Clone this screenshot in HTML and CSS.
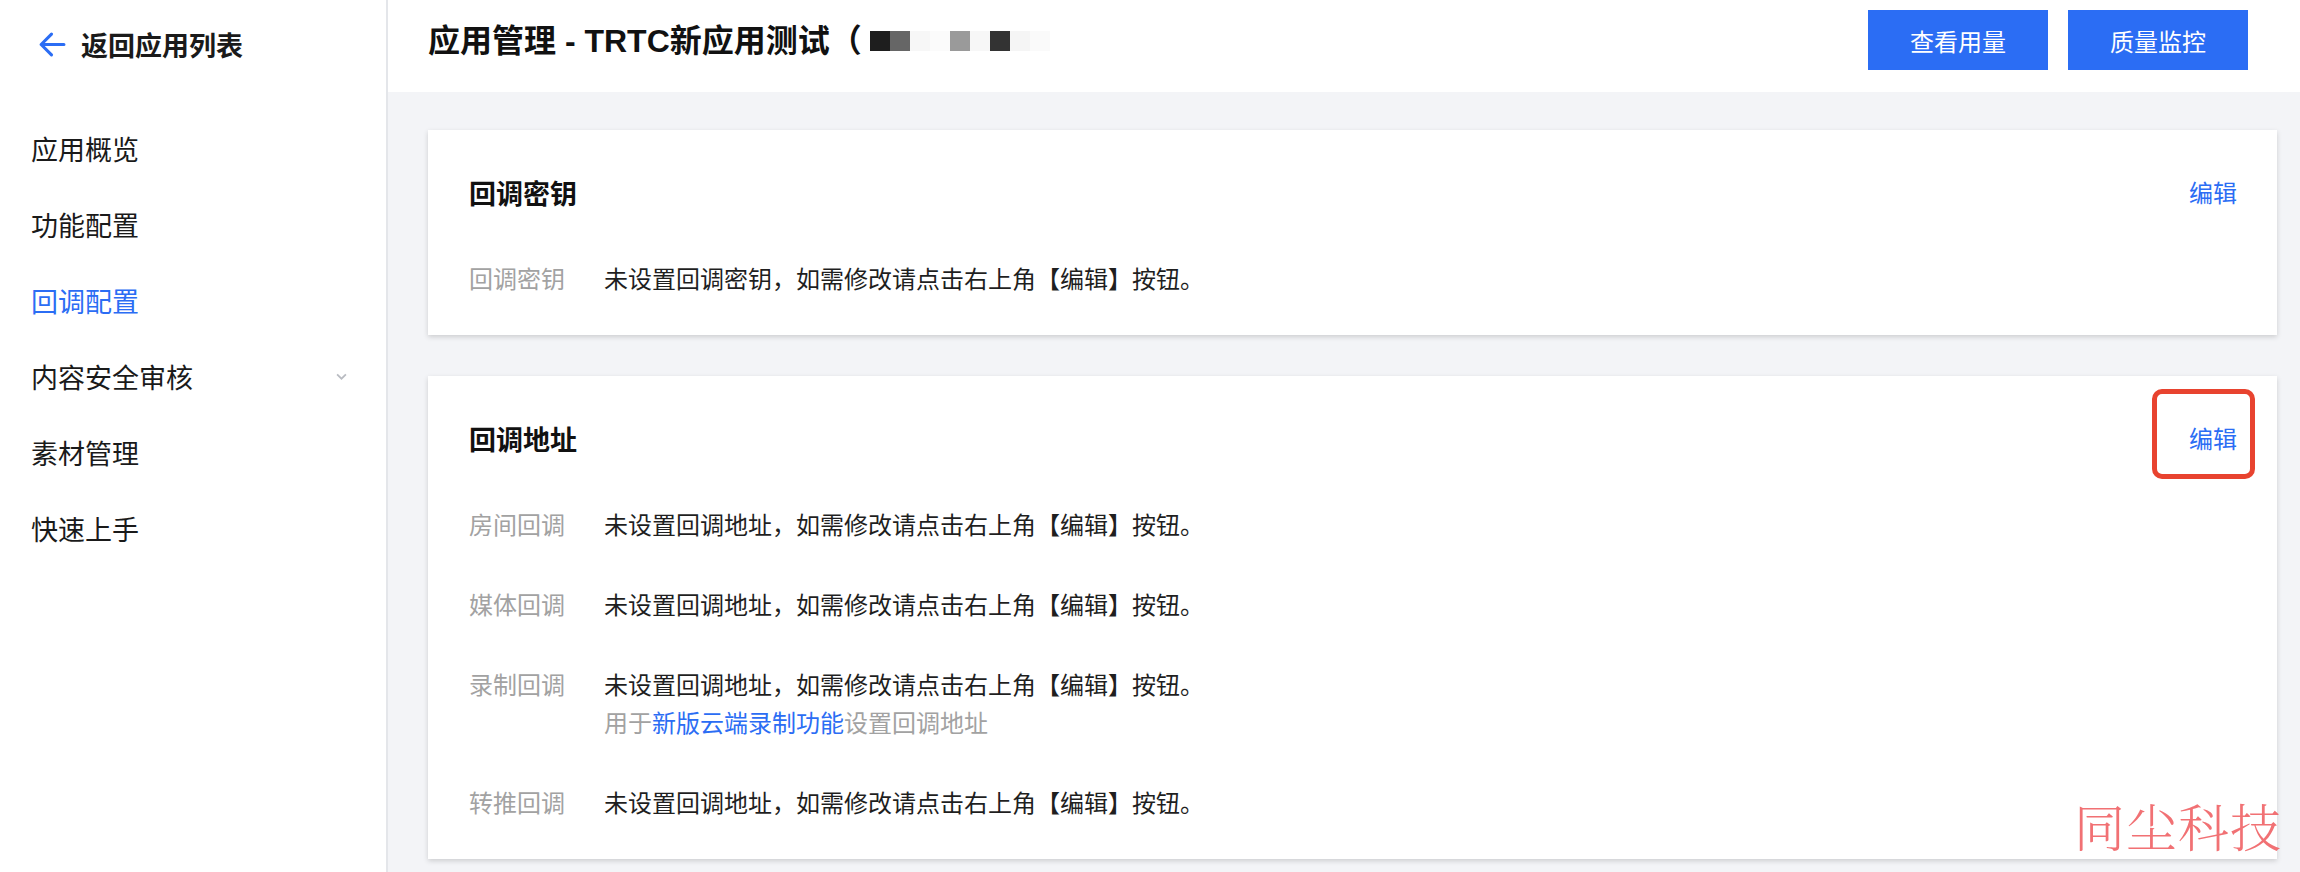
FILE: index.html
```html
<!DOCTYPE html>
<html lang="zh-CN">
  <head>
    <meta charset="UTF-8" />
    <meta name="viewport" content="width=device-width, initial-scale=1.0" />
    <title>回调配置</title>
    <link rel="stylesheet" href="styles.css">
  </head>
  <body>
    <aside class="sidebar">
      <a class="back" href="#">
        <svg class="back-icon" viewBox="0 0 28 28" fill="none">
          <path d="M26 14H4M14 4L4 14l10 10" stroke="#2b6df4" stroke-width="3" stroke-linecap="round" stroke-linejoin="round" />
        </svg>
        <span>返回应用列表</span>
      </a>
      <nav class="menu">
        <a class="menu-item" href="#">应用概览</a>
        <a class="menu-item" href="#">功能配置</a>
        <a class="menu-item active" href="#">回调配置</a>
        <a class="menu-item" href="#">
          内容安全审核
          <svg class="chevron" viewBox="0 0 10 6" fill="none">
            <path d="M1 1l4 4 4-4" stroke="#b9bcc2" stroke-width="1.6" />
          </svg>
        </a>
        <a class="menu-item" href="#">素材管理</a>
        <a class="menu-item" href="#">快速上手</a>
      </nav>
    </aside>

    <main class="main">
      <header class="topbar">
        <h1 class="page-title">
          应用管理 - TRTC新应用测试（
          <span class="mask">
            <i style="background:#1e1e1e"></i><i style="background:#666"></i><i style="background:#f7f7f7"></i><i style="background:#fbfbfb"></i><i style="background:#9a9a9a"></i><i style="background:#f7f7f7"></i><i style="background:#333"></i><i style="background:#f5f5f5"></i><i style="background:#fafafa"></i>
          </span>
        </h1>
        <div class="actions">
          <button class="btn">查看用量</button>
          <button class="btn">质量监控</button>
        </div>
      </header>

      <section class="content">
        <div class="card">
          <div class="card-head">
            <h2 class="card-title">回调密钥</h2>
            <a class="edit" href="#">编辑</a>
          </div>
          <div class="rows">
            <div class="row">
              <span class="label">回调密钥</span>
              <span class="value">未设置回调密钥，如需修改请点击右上角【编辑】按钮。</span>
            </div>
          </div>
        </div>

        <div class="card">
          <div class="card-head">
            <h2 class="card-title">回调地址</h2>
            <a class="edit" href="#">编辑<span class="mark"></span></a>
          </div>
          <div class="rows">
            <div class="row">
              <span class="label">房间回调</span>
              <span class="value">未设置回调地址，如需修改请点击右上角【编辑】按钮。</span>
            </div>
            <div class="row">
              <span class="label">媒体回调</span>
              <span class="value">未设置回调地址，如需修改请点击右上角【编辑】按钮。</span>
            </div>
            <div class="row">
              <span class="label">录制回调</span>
              <div class="value">
                未设置回调地址，如需修改请点击右上角【编辑】按钮。
                <div class="hint">用于<a href="#">新版云端录制功能</a>设置回调地址</div>
              </div>
            </div>
            <div class="row">
              <span class="label">转推回调</span>
              <span class="value">未设置回调地址，如需修改请点击右上角【编辑】按钮。</span>
            </div>
          </div>
        </div>
      </section>
    </main>

    <div class="watermark">同尘科技</div>
  </body>
</html>
```

FILE: styles.css
```css
* {
  box-sizing: border-box;
}

html,
body {
  margin: 0;
  padding: 0;
}

body {
  display: flex;
  height: 100vh;
  overflow: hidden;
  position: relative;
  font-family: "Noto Sans CJK SC", "Noto Sans", sans-serif;
  color: #1f1f1f;
  background-color: #f3f4f7;
}

a {
  text-decoration: none;
  color: inherit;
}

/* sidebar */
.sidebar {
  width: 388px;
  flex-shrink: 0;
  background-color: #fff;
  border-right: 2px solid #e4e6ea;
}

.back {
  height: 88px;
  display: flex;
  align-items: center;
  gap: 15px;
  padding-left: 37px;
  font-size: 27px;
  font-weight: 700;
  color: #1a1a1a;
}

.back-icon {
  width: 29px;
  height: 29px;
}

.menu {
  margin-top: 22px;
  display: flex;
  flex-direction: column;
}

.menu-item {
  height: 76px;
  display: flex;
  align-items: center;
  justify-content: space-between;
  padding: 0 39px 0 31px;
  font-size: 27px;
  color: #1a1a1a;
}

.menu-item.active {
  color: #2b6df4;
}

.chevron {
  width: 11px;
  height: 7px;
}

/* main */
.main {
  flex: 1;
  display: flex;
  flex-direction: column;
  min-width: 0;
}

.topbar {
  height: 92px;
  flex-shrink: 0;
  display: flex;
  justify-content: space-between;
  align-items: flex-start;
  padding: 10px 52px 0 40px;
  background-color: #fff;
}

.page-title {
  margin: 12px 0 0;
  font-family: "Liberation Sans", "Noto Sans CJK SC", sans-serif;
  font-size: 32px;
  line-height: 38px;
  font-weight: 700;
  color: #111;
  display: flex;
  align-items: center;
}

.mask {
  display: inline-flex;
  margin-left: 8px;
}

.mask i {
  display: block;
  width: 20px;
  height: 20px;
}

.actions {
  display: flex;
  gap: 20px;
}

.btn {
  width: 180px;
  height: 60px;
  border: none;
  background-color: #2b6df4;
  color: #fff;
  font-family: inherit;
  font-size: 24px;
  cursor: pointer;
}

.content {
  padding: 38px 23px 0 40px;
  display: flex;
  flex-direction: column;
  gap: 41px;
}

.card {
  background-color: #fff;
  padding: 43px 40px 38px 41px;
  box-shadow: 0 2px 5px rgba(0, 0, 0, 0.16);
}

.card-head {
  display: flex;
  justify-content: space-between;
  align-items: center;
  height: 38px;
  margin-bottom: 48px;
}

.card-title {
  margin: 0;
  font-size: 27px;
  font-weight: 700;
  color: #111;
}

.edit {
  position: relative;
  font-size: 24px;
  line-height: 38px;
  color: #2b6df4;
}

.mark {
  position: absolute;
  left: -37px;
  right: -18px;
  top: -30px;
  bottom: -22px;
  border: 5px solid #e8432f;
  border-radius: 10px;
}

.rows {
  display: flex;
  flex-direction: column;
  gap: 42px;
}

.row {
  display: flex;
  font-size: 24px;
  line-height: 38px;
}

.label {
  width: 135px;
  flex-shrink: 0;
  color: #a2a2a2;
}

.value {
  color: #1f1f1f;
}

.hint {
  color: #a2a2a2;
}

.hint a {
  color: #2b6df4;
}

.watermark {
  position: absolute;
  right: 18px;
  bottom: 10px;
  font-family: "Noto Serif CJK SC", "Noto Sans CJK SC", serif;
  font-size: 51px;
  font-weight: 300;
  letter-spacing: 1px;
  color: rgba(238, 88, 92, 0.85);
}
```
